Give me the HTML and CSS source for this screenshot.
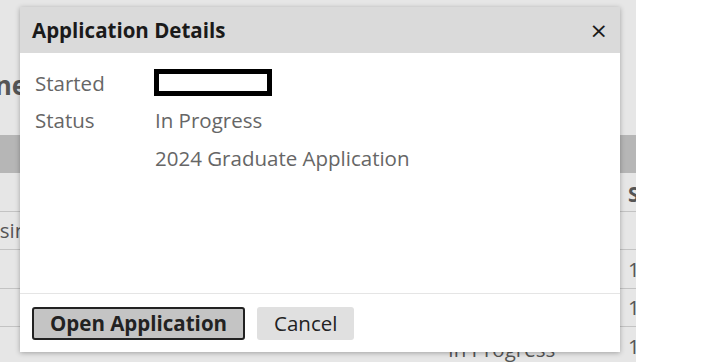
FILE: index.html
```html
<!DOCTYPE html>
<html>

<head>
    <meta charset="UTF-8">
    <meta name="viewport" content="width=device-width, initial-scale=1.0">
    <title>Application Details</title>

    <link rel="stylesheet" href="styles.css">
</head>

<body>
    <div class="page">
        <h1 class="page-title">Online Applications</h1>

        <div class="band"></div>

        <div class="table">
            <div class="row row-head">
                <div class="cell"></div>
                <div class="cell cell-status">Status</div>
            </div>
            <div class="row">
                <div class="cell cell-name">Business</div>
                <div class="cell cell-status"></div>
            </div>
            <div class="row">
                <div class="cell"></div>
                <div class="cell cell-status">1</div>
            </div>
            <div class="row">
                <div class="cell"></div>
                <div class="cell cell-status">1</div>
            </div>
            <div class="row">
                <div class="cell cell-progress">In Progress</div>
                <div class="cell cell-status">1</div>
            </div>
        </div>
    </div>

    <div class="dialog" id="dialog">
        <div class="dialog-header">
            <span class="dialog-title">Application Details</span>
            <span class="dialog-close">&times;</span>
        </div>

        <div class="dialog-body">
            <div class="detail-row">
                <span class="detail-label">Started</span>
                <span class="detail-value"><span class="redacted"></span></span>
            </div>
            <div class="detail-row">
                <span class="detail-label">Status</span>
                <span class="detail-value">In Progress</span>
            </div>
            <div class="detail-row">
                <span class="detail-label"></span>
                <span class="detail-value">2024 Graduate Application</span>
            </div>
        </div>

        <div class="dialog-footer">
            <div class="button button-primary">Open Application</div>
            <div class="button">Cancel</div>
        </div>
    </div>
</body>

</html>
```

FILE: styles.css
```css
* { padding: 0px; margin: 0px; box-sizing: border-box; font-family: "Open Sans", "Liberation Sans", sans-serif; }

body { background-color: #ffffff; width: 720px; height: 362px; overflow: hidden; position: relative; }

.page { width: 636px; height: 362px; background-color: #e6e6e6; padding-top: 67px; overflow: hidden; }

.page-title { font-size: 26px; font-weight: 700; color: #555555; line-height: 36px; margin-left: -59px; white-space: nowrap; }

.band { height: 38px; margin-top: 32px; background-color: #b6b6b6; }

.table { display: flex; flex-direction: column; }
.row { display: grid; grid-template-columns: 628px 1fr; height: 38.5px; border-bottom: 1px solid #c3c3c3; color: #555555; font-size: 20.5px; align-items: center; white-space: nowrap; }
.row-head { font-weight: 700; }
.row-head .cell-status { padding-top: 5px; }

.cell { overflow: hidden; }
.cell-name { margin-left: -26px; }
.cell-progress { padding-left: 448px; padding-top: 6px; }

.dialog { position: absolute; left: 20px; top: 7px; width: 600px; height: 345px; background-color: #ffffff; display: flex; flex-direction: column; box-shadow: 0px 1px 5px rgba(0, 0, 0, 0.3); }

.dialog-header { height: 46px; background-color: #dadada; display: flex; align-items: center; justify-content: space-between; padding: 0px 12px 0px 12px; }
.dialog-title { font-size: 20.5px; font-weight: 700; color: #1a1a1a; }
.dialog-close { font-size: 22px; color: #1a1a1a; font-family: "DejaVu Sans", sans-serif; }

.dialog-body { flex: 1; padding: 11px 15px 9px 15px; border-bottom: 1px solid #e5e5e5; }

.detail-row { display: flex; height: 37.5px; align-items: center; font-size: 20.5px; color: #666666; }
.detail-label { width: 120px; }
.redacted { display: block; width: 118px; height: 27px; border: 5px solid #000000; margin-left: -1px; }

.dialog-footer { height: 58px; display: flex; align-items: center; gap: 12px; padding: 0px 12px; }

.button { height: 33px; padding: 0px 17px; display: flex; align-items: center; border-radius: 3px; background-color: #e0e0e0; color: #222222; font-size: 20.5px; }
.button-primary { background-color: #c4c4c4; border: 2px solid #222222; font-weight: 700; padding: 0px 16px; }
```
